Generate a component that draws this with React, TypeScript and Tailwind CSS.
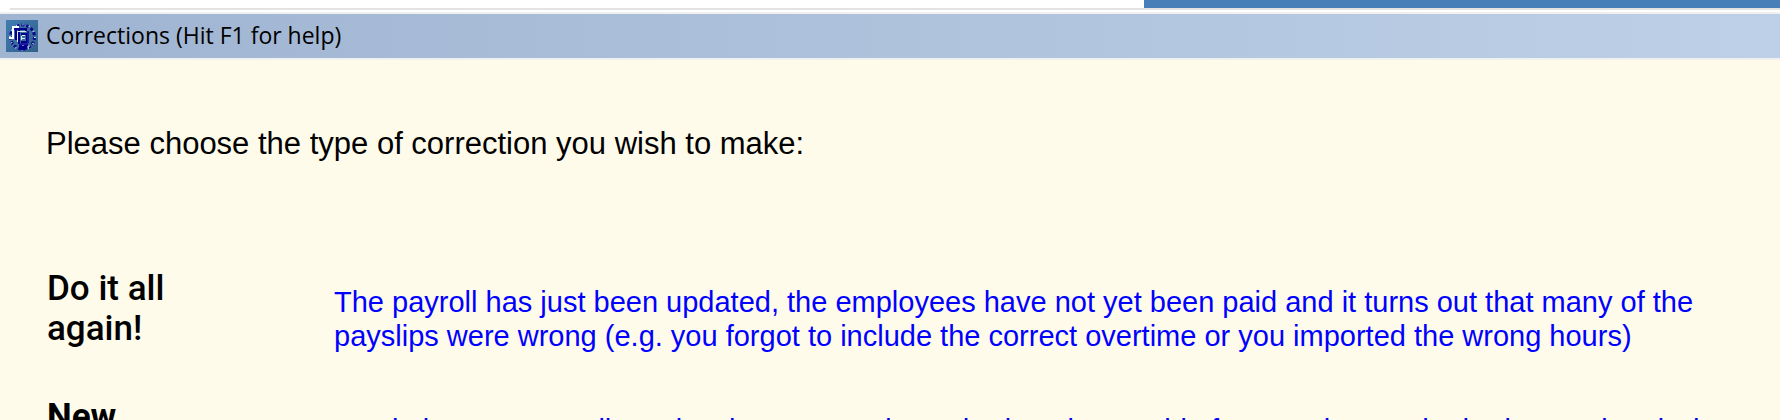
interface Correction {
  label: string;
  bold: boolean;
  description: string;
}

const corrections: Correction[] = [
  {
    label: 'Do it all again!',
    bold: false,
    description:
      'The payroll has just been updated, the employees have not yet been paid and it turns out that many of the payslips were wrong (e.g. you forgot to include the correct overtime or you imported the wrong hours)',
  },
  {
    label: 'New',
    bold: true,
    description:
      'In relation to a payroll previously processed, you had not been told of an employee who had started and who',
  },
];

function AppIcon() {
  return (
    <svg className="h-8 w-8 shrink-0" viewBox="0 0 32 32" fill="none" aria-hidden="true">
      <defs>
        <linearGradient id="iconBg" x1="0" y1="0" x2="1" y2="1">
          <stop offset="0" stopColor="#3f7cb2" />
          <stop offset="1" stopColor="#34608c" />
        </linearGradient>
      </defs>
      <rect width="32" height="32" fill="url(#iconBg)" />
      {/* ring of dark and light ticks */}
      <circle cx="16.5" cy="17" r="12" stroke="#0a0a8c" strokeWidth="3" strokeDasharray="3 2" />
      <circle cx="16.5" cy="17" r="12.5" stroke="#c5d8ee" strokeWidth="2" strokeDasharray="1 5.5" />
      <path d="M13 25h9v3l-3 2h-4l-2-2z" fill="#00008b" />
      <path d="M16 25h2v-2h2M21 27h2v-2" stroke="#dce8f5" />
      {/* monogram */}
      <g shapeRendering="crispEdges">
        <path d="M10 9v11M9 9h11v2M13 8v16M15 14h6v8h-6" stroke="#00008b" strokeWidth="2" />
        <path d="M3 18h4V7h6" stroke="#ffffff" strokeWidth="2" />
        <path d="M11.5 22V11.5H20M15.5 15.5H19M15.5 15.5V20M15.5 18.5h3" stroke="#dce8f5" />
        <path d="M22 11v12M13 24h9" stroke="#1a1a9e" strokeWidth="2" />
      </g>
    </svg>
  );
}

export default function App() {
  return (
    <div className="h-screen overflow-hidden bg-[#fffbeb] font-['Liberation_Sans',Arial,sans-serif]">
      <div className="flex h-2 justify-end bg-white">
        <div className="w-[636px] bg-[#4780b9]" />
      </div>
      <div className="h-1 bg-white pl-2.5">
        <div className="h-0.5 bg-[#e3e3e3]" />
      </div>

      <header className="flex h-12 items-center gap-2 border-y-2 border-[#f0f0f0] bg-linear-to-r from-[#9fb4d1] to-[#bdd0e7] px-1.5 font-['Open_Sans','Noto_Sans',sans-serif]">
        <AppIcon />
        <h1 className="pb-0.5 text-[23px] leading-8 text-black">Corrections (Hit F1 for help)</h1>
      </header>

      <main className="px-[46px] pt-[66px]">
        <p className="text-[31px] leading-9 text-black">Please choose the type of correction you wish to make:</p>
        <div className="mt-[107px] flex flex-col gap-11">
          {corrections.map((item) => (
            <div key={item.label} className="flex items-start gap-12">
              <button
                type="button"
                className={`w-60 shrink-0 pr-24 pl-px text-left font-[Roboto,sans-serif] text-[35px] leading-10 ${
                  item.bold ? 'font-bold' : 'font-medium'
                }`}
              >
                {item.label}
              </button>
              <p className="mt-4 flex-1 text-[29px] leading-[34px] text-[#0000ff]">{item.description}</p>
            </div>
          ))}
        </div>
      </main>
    </div>
  );
}
